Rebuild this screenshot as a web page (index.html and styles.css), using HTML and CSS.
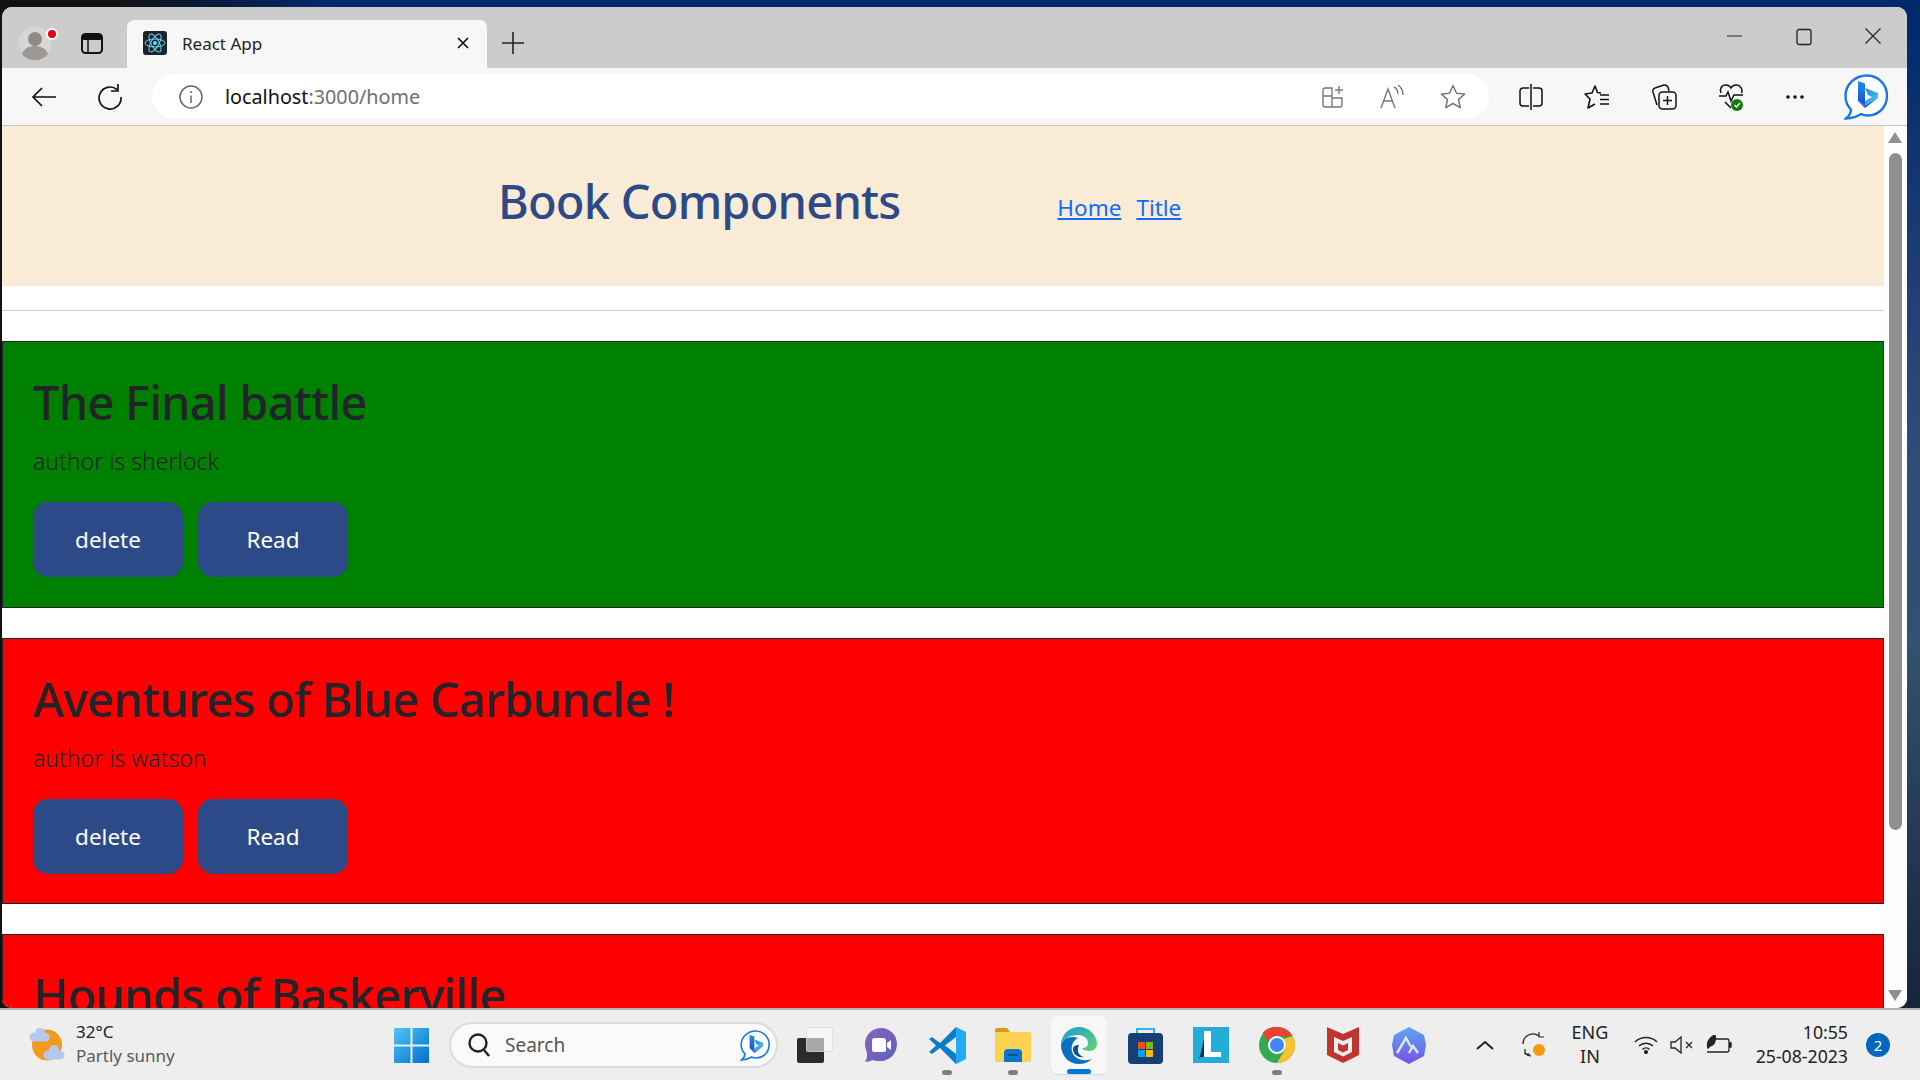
FILE: index.html
```html
<!DOCTYPE html>
<html lang="en">
<head>
    <meta charset="UTF-8">
    <title>React App</title>
    <link rel="stylesheet" href="styles.css">
</head>
<body>
    <svg class="defs" width="0" height="0">
        <defs>
            <linearGradient id="bingStem" x1="0" y1="0" x2="0" y2="1">
                <stop offset="0" stop-color="#1b8fe8"/>
                <stop offset="1" stop-color="#1a4fd0"/>
            </linearGradient>
            <linearGradient id="bingBowl" x1="0" y1="0" x2="1" y2="1">
                <stop offset="0" stop-color="#2f7fe6"/>
                <stop offset="1" stop-color="#45d2f0"/>
            </linearGradient>
            <linearGradient id="winFill" x1="0" y1="0" x2="1" y2="1">
                <stop offset="0" stop-color="#4fc6f5"/>
                <stop offset="1" stop-color="#0070cc"/>
            </linearGradient>
            <linearGradient id="edgeFill" x1="0" y1="0" x2="1" y2="1">
                <stop offset="0" stop-color="#1c9ad6"/>
                <stop offset="1" stop-color="#60d86c"/>
            </linearGradient>
            <linearGradient id="teamsFill" x1="0" y1="0" x2="1" y2="1">
                <stop offset="0" stop-color="#8a62b8"/>
                <stop offset="1" stop-color="#5b62c4"/>
            </linearGradient>
            <linearGradient id="hexFill" x1="0" y1="0" x2="0" y2="1">
                <stop offset="0" stop-color="#5aa8f0"/>
                <stop offset="1" stop-color="#7a4fe8"/>
            </linearGradient>
            <symbol id="bing" viewBox="0 0 44 46">
                <path d="M23 1.500c11 0 20 9 20 20s-8 20-19 20c-3 0-5-.5-7-1.500-3 2-8 4-15 4.500 3-2.500 5-6 5-9C3 31.500 1.500 27 1.500 22 1.500 10.500 11 1.500 23 1.500z" fill="#fff" stroke="#1a78e0" stroke-width="2.400"/>
                <path d="M14 7l7 2.500v22L14 27z" fill="url(#bingStem)"/>
                <path d="M21 31.500l13-7.500v-5l-13-5 3 7 4 2-7 4z" fill="url(#bingBowl)"/>
                <path d="M14 27l7 7 13-10-13 7.500z" fill="#1a5ad8"/>
            </symbol>
        </defs>
    </svg>

    <div class="desktop">
        <div class="window">
            <div class="tabstrip">
                <div class="avatar">
                    <svg width="34" height="34" viewBox="0 0 34 34">
                        <circle cx="17" cy="17" r="16.5" fill="#d8d6d4"/>
                        <circle cx="17" cy="13" r="7" fill="#8e8a86"/>
                        <path d="M4 28c2-6 8-8 13-8s11 2 13 8c-3 4-8 6-13 6S7 32 4 28z" fill="#9c9894"/>
                    </svg>
                    <span class="avatar-dot"></span>
                </div>
                <svg class="sidebar-btn" width="22" height="21" viewBox="0 0 22 21">
                    <rect x="1" y="1" width="20" height="19" rx="3.5" fill="none" stroke="#111" stroke-width="2"/>
                    <rect x="1" y="1" width="20" height="6" rx="2" fill="#111"/>
                    <path d="M7 7v13" stroke="#111" stroke-width="1.5"/>
                </svg>
                <div class="tab">
                    <svg class="favicon" width="24" height="24" viewBox="0 0 24 24">
                        <rect width="24" height="24" rx="3" fill="#20232a"/>
                        <g fill="none" stroke="#61dafb" stroke-width="1">
                            <ellipse cx="12" cy="12" rx="10" ry="4"/>
                            <ellipse cx="12" cy="12" rx="10" ry="4" transform="rotate(60 12 12)"/>
                            <ellipse cx="12" cy="12" rx="10" ry="4" transform="rotate(120 12 12)"/>
                        </g>
                        <circle cx="12" cy="12" r="2" fill="#61dafb"/>
                    </svg>
                    <span class="tab-title">React App</span>
                    <svg width="14" height="14" viewBox="0 0 14 14">
                        <path d="M2 2l10 10M12 2L2 12" stroke="#111" stroke-width="1.7"/>
                    </svg>
                </div>
                <svg class="new-tab" width="22" height="22" viewBox="0 0 22 22">
                    <path d="M11 0v22M0 11h22" stroke="#222" stroke-width="1.6"/>
                </svg>
                <div class="win-controls">
                    <svg width="16" height="16" viewBox="0 0 16 16"><path d="M0 8h15" stroke="#222" stroke-width="1.2"/></svg>
                    <svg width="16" height="18" viewBox="0 0 16 18"><rect x="1" y="1.500" width="14" height="15" rx="2" fill="none" stroke="#222" stroke-width="1.3"/></svg>
                    <svg width="16" height="16" viewBox="0 0 16 16"><path d="M0.500 0.500l15 15M15.500 0.500l-15 15" stroke="#222" stroke-width="1.2"/></svg>
                </div>
            </div>

            <div class="toolbar">
                <svg class="tool-back" width="26" height="22" viewBox="0 0 26 22">
                    <path d="M25 11H2M11 2l-9 9 9 9" fill="none" stroke="#111" stroke-width="1.7"/>
                </svg>
                <svg class="tool-reload" width="26" height="26" viewBox="0 0 26 26">
                    <path d="M20 5.500A11 11 0 1 0 24 13" fill="none" stroke="#111" stroke-width="1.7"/>
                    <path d="M21 0v7h-7" fill="none" stroke="#111" stroke-width="1.7"/>
                </svg>
                <div class="addressbar">
                    <svg class="info-icon" width="24" height="24" viewBox="0 0 24 24">
                        <circle cx="12" cy="12" r="11" fill="none" stroke="#666" stroke-width="1.500"/>
                        <path d="M12 10.500V18" stroke="#666" stroke-width="1.500"/>
                        <circle cx="12" cy="7" r="1.100" fill="#666"/>
                    </svg>
                    <span class="url"><span class="url-host">localhost</span>:3000/home</span>
                    <div class="address-icons">
                        <svg width="22" height="24" viewBox="0 0 22 24" fill="none" stroke="#777" stroke-width="1.400">
                            <path d="M10 3H3a2 2 0 0 0-2 2v6h9zM10 11H1v9a2 2 0 0 0 2 2h7zM10 13h10v7a2 2 0 0 1-2 2h-8z"/>
                            <path d="M17 1v8M13 5h8"/>
                        </svg>
                        <svg width="24" height="26" viewBox="0 0 24 26" fill="none" stroke="#777" stroke-width="1.400">
                            <path d="M1 24l7-19 7 19M3.500 17h9"/>
                            <path d="M14 3c2 1 4 3 4 7M18 1c3 2 5 5 5 10"/>
                        </svg>
                        <svg width="26" height="25" viewBox="0 0 26 25" fill="none" stroke="#777" stroke-width="1.500">
                            <path d="M13 1.500l3.500 7.700 8 .9-6 5.500 1.700 8.100-7.200-4.200-7.200 4.200 1.700-8.100-6-5.500 8-.9z" stroke-linejoin="round"/>
                        </svg>
                    </div>
                </div>
                <div class="toolbar-icons">
                    <svg width="24" height="26" viewBox="0 0 24 26" fill="none" stroke="#111" stroke-width="1.500">
                        <path d="M10 4H4a3 3 0 0 0-3 3v12a3 3 0 0 0 3 3h6M14 4h6a3 3 0 0 1 3 3v12a3 3 0 0 1-3 3h-6M12 0v26"/>
                    </svg>
                    <svg width="26" height="26" viewBox="0 0 26 26" fill="none" stroke="#111" stroke-width="1.600">
                        <path d="M17 9l-3.500-.5L11 2 8 9 1 10l5 5-2 9 7-4" stroke-linejoin="round"/>
                        <path d="M16 11h9M16 15.500h9M16 20h9"/>
                    </svg>
                    <svg width="26" height="28" viewBox="0 0 26 28" fill="none" stroke="#111" stroke-width="1.500">
                        <path d="M6 22L2 9a3 3 0 0 1 2-4l9-3c2-.5 3 .5 4 2l1 4"/>
                        <rect x="8" y="9" width="17" height="17" rx="3.500"/>
                        <path d="M16.500 13v9M12 17.500h9"/>
                    </svg>
                    <svg width="26" height="28" viewBox="0 0 26 28" fill="none">
                        <path d="M3 10C1 6 4 2 7 2c3-.5 5 1 6 3 1-2 3-3.500 6-3 4 .5 6 5 4.500 8M7 19l6 6" stroke="#111" stroke-width="1.500"/>
                        <path d="M1 13h7l2-4 3 9 3-6h9" stroke="#111" stroke-width="1.500"/>
                        <circle cx="19" cy="22" r="6" fill="#107c10"/>
                        <path d="M16.500 22l2 2 3.500-4" stroke="#fff" stroke-width="1.300"/>
                    </svg>
                    <svg width="20" height="6" viewBox="0 0 20 6" fill="#111">
                        <circle cx="3" cy="3" r="1.800"/><circle cx="10" cy="3" r="1.800"/><circle cx="17" cy="3" r="1.800"/>
                    </svg>
                </div>
                <svg class="tool-bing" width="44" height="46"><use href="#bing"/></svg>
            </div>

            <div class="viewport">
                <div class="page">
                    <header class="page-header">
                        <h1 class="brand">Book Components</h1>
                        <nav class="nav-links">
                            <a href="#">Home</a>
                            <a href="#">Title</a>
                        </nav>
                    </header>
                    <hr class="divider">
                    <section class="book book-green">
                        <h1>The Final battle</h1>
                        <p>author is sherlock</p>
                        <div class="book-actions">
                            <button class="btn">delete</button>
                            <button class="btn">Read</button>
                        </div>
                    </section>
                    <section class="book book-red">
                        <h1>Aventures of Blue Carbuncle !</h1>
                        <p>author is watson</p>
                        <div class="book-actions">
                            <button class="btn">delete</button>
                            <button class="btn">Read</button>
                        </div>
                    </section>
                    <section class="book book-red">
                        <h1>Hounds of Baskerville</h1>
                    </section>
                </div>
                <div class="scrollbar">
                    <span class="arrow-up"></span>
                    <span class="thumb"></span>
                    <span class="arrow-down"></span>
                </div>
            </div>
        </div>
    </div>

    <footer class="taskbar">
        <div class="weather">
            <svg width="38" height="36" viewBox="0 0 38 36">
                <ellipse cx="19" cy="18" rx="15" ry="15.500" fill="#f39a1c"/>
                <g fill="#b5c9f0">
                    <circle cx="12" cy="6" r="5"/>
                    <circle cx="6" cy="10" r="4.500"/>
                    <circle cx="17" cy="10" r="4.500"/>
                    <rect x="6" y="9" width="11" height="5.500"/>
                    <circle cx="26" cy="23" r="5"/>
                    <circle cx="20" cy="28" r="4.500"/>
                    <circle cx="32" cy="28" r="4.500"/>
                    <rect x="20" y="27" width="12" height="5.500"/>
                </g>
            </svg>
            <div class="weather-text">
                <span class="temp">32°C</span>
                <span class="sky">Partly sunny</span>
            </div>
        </div>
        <svg class="start" width="35" height="35" viewBox="0 0 35 35">
            <path d="M0 1a1 1 0 0 1 1-1h15.500v16.500H0zM18.500 0H34a1 1 0 0 1 1 1v15.500H18.500zM0 18.500h16.500V35H1a1 1 0 0 1-1-1zM18.500 18.500H35V34a1 1 0 0 1-1 1H18.500z" fill="url(#winFill)"/>
        </svg>
        <div class="searchbox">
            <svg width="24" height="26" viewBox="0 0 24 26" fill="none" stroke="#222" stroke-width="2.400">
                <circle cx="11" cy="11" r="8.500"/>
                <path d="M17 18l5 6"/>
            </svg>
            <span class="search-label">Search</span>
            <svg class="search-bing" width="30" height="31"><use href="#bing"/></svg>
        </div>
        <div class="apps">
            <div class="app">
                <svg width="36" height="36" viewBox="0 0 36 36">
                    <rect x="0" y="11" width="27" height="25" rx="2" fill="#2b2b2b"/>
                    <rect x="9.500" y="0.500" width="26" height="24" rx="2" fill="#f6f6f6" stroke="#dedede"/>
                    <rect x="9.500" y="11" width="17.500" height="13.500" fill="#a8a8a8"/>
                </svg>
            </div>
            <div class="app">
                <svg width="34" height="36" viewBox="0 0 34 36">
                    <path d="M17 1c9 0 16 7 16 16s-7 17-16 17c-3 0-6 0-8-1-3 1-6 2-8 2 2-3 2-6 2-9-1-3-2-6-2-9C1 8 8 1 17 1z" fill="url(#teamsFill)"/>
                    <rect x="8" y="11" width="14" height="14" rx="2.500" fill="#fff"/>
                    <path d="M23 16l4-3v10l-4-3z" fill="#fff"/>
                </svg>
            </div>
            <div class="app has-dot">
                <svg width="37" height="37" viewBox="0 0 37 37">
                    <path d="M27 0L11 16 3 10 0 12l7 6.500L0 25l3 2 8-6 16 16 3-2V2z" fill="#0a7cc8"/>
                    <path d="M27 10v17l-11-8.500z" fill="#ececec"/>
                    <path d="M27 0l10 5v27l-10 5z" fill="#23aaf2"/>
                </svg>
            </div>
            <div class="app has-dot">
                <svg width="36" height="34" viewBox="0 0 36 34">
                    <path d="M0 2a2 2 0 0 1 2-2h10l3 4h-15z" fill="#d99a12"/>
                    <path d="M0 4h34a2 2 0 0 1 2 2v26a2 2 0 0 1-2 2H0z" fill="#fcd250"/>
                    <path d="M9 34v-9a4 4 0 0 1 4-4h10a4 4 0 0 1 4 4v9z" fill="#0a76cc"/>
                    <path d="M13 27h10" stroke="#063e78" stroke-width="1.500"/>
                </svg>
            </div>
            <div class="app app-active">
                <svg width="36" height="37" viewBox="0 0 36 37">
                    <path d="M0 18C0 8 8 0 18 0c10 0 18 8 18 17 0 4-3 7-8 7-3 0-6-1-7-3 4 0 6-2 6-5 0-5-5-8-10-8C8 8 2 12 0 18z" fill="url(#edgeFill)"/>
                    <path d="M0 18c0 11 8 19 18 19 5 0 10-2 13-5-9 3-16 0-19-5-3-6-1-13 5-16C8 8 2 12 0 18z" fill="#0c6fc0"/>
                    <path d="M12 22c0 6 6 9 11 8-5-1-8-6-5-12-3 0-6 1-6 4z" fill="#0a4e9a"/>
                </svg>
            </div>
            <div class="app">
                <svg width="35" height="37" viewBox="0 0 35 37">
                    <path d="M9 8V2h17v6" fill="none" stroke="#2fb4ee" stroke-width="2"/>
                    <rect x="0" y="6" width="35" height="31" rx="4" fill="#173f75"/>
                    <rect x="10" y="15" width="7" height="7" fill="#f25022"/>
                    <rect x="18" y="15" width="7" height="7" fill="#7fba00"/>
                    <rect x="10" y="23" width="7" height="7" fill="#00a4ef"/>
                    <rect x="18" y="23" width="7" height="7" fill="#ffb900"/>
                </svg>
            </div>
            <div class="app">
                <svg width="36" height="36" viewBox="0 0 36 36">
                    <rect width="36" height="36" fill="#23acd8"/>
                    <path d="M11 4h7v21h10v5H11z" fill="#fff"/>
                    <path d="M11 12v18H7.500L6 33z" fill="#12305e"/>
                </svg>
            </div>
            <div class="app has-dot">
                <svg width="36" height="36" viewBox="0 0 36 36">
                    <circle cx="18" cy="18" r="18" fill="#34a853"/>
                    <path d="M18 0a18 18 0 0 1 15.600 9H18a9 9 0 0 0-8.500 6L3.500 6A18 18 0 0 1 18 0z" fill="#ea4335"/>
                    <path d="M33.600 9A18 18 0 0 1 18 36l8-13.500A9 9 0 0 0 24.500 12z" fill="#fbc02d"/>
                    <circle cx="18" cy="18" r="9" fill="#fff"/>
                    <circle cx="18" cy="18" r="7" fill="#4285f4"/>
                </svg>
            </div>
            <div class="app">
                <svg width="32" height="36" viewBox="0 0 32 36">
                    <path d="M0 0l16 7 16-7v28L16 36 0 28z" fill="#c1342f"/>
                    <path d="M7 10l9 4 9-4v15l-9 4.500L7 25z" fill="#eeeeee"/>
                    <path d="M11 16l5 2.500 5-2.500v7l-5 2.500-5-2.500z" fill="#c1342f"/>
                </svg>
            </div>
            <div class="app">
                <svg width="34" height="37" viewBox="0 0 34 37">
                    <path d="M17 0l15 8 2 10-2 11-15 8-15-8-2-11 2-10z" fill="url(#hexFill)"/>
                    <path d="M5 26L14 11l5 9M17 26l4-7 5 7" fill="none" stroke="#dbe6ff" stroke-width="2.500"/>
                </svg>
            </div>
        </div>
        <div class="tray">
            <svg class="tray-chevron" width="18" height="10" viewBox="0 0 18 10">
                <path d="M1 9l8-7 8 7" fill="none" stroke="#222" stroke-width="2"/>
            </svg>
            <svg class="tray-sync" width="26" height="26" viewBox="0 0 26 26">
                <path d="M2 12a10 10 0 0 1 16-8M18 0v5h5M4 17v5h5M4 21a9 9 0 0 0 6 3" fill="none" stroke="#222" stroke-width="1.200"/>
                <circle cx="18" cy="18" r="6" fill="#f79a0c"/>
            </svg>
            <div class="tray-lang"><span>ENG</span><span>IN</span></div>
            <svg width="24" height="18" viewBox="0 0 24 18" fill="none" stroke="#222" stroke-width="1.500">
                <path d="M1 6a16 16 0 0 1 22 0M5 10a10 10 0 0 1 14 0M8.500 13.500a5 5 0 0 1 7 0"/>
                <circle cx="12" cy="16" r="1.300" fill="#222"/>
            </svg>
            <svg class="tray-sound" width="24" height="18" viewBox="0 0 24 18" fill="none" stroke="#222" stroke-width="1.300">
                <path d="M1 6h4l6-5v16l-6-5H1z"/>
                <path d="M16 6l6 6M22 6l-6 6"/>
            </svg>
            <svg class="tray-battery" width="26" height="20" viewBox="0 0 26 20" fill="none" stroke="#222" stroke-width="1.300">
                <path d="M9 4h12a2 2 0 0 1 2 2v9a2 2 0 0 1-2 2H1"/>
                <path d="M23 8h2v4h-2" fill="#222"/>
                <path d="M2 13C0 7 4 2 9 0c1 5 0 10-5 11z" fill="#222"/>
            </svg>
            <div class="clock"><span>10:55</span><span>25-08-2023</span></div>
            <span class="badge">2</span>
        </div>
    </footer>
</body>
</html>
```

FILE: styles.css
```css
* {
    box-sizing: border-box;
}

body {
    margin: 0;
    width: 1920px;
    height: 1080px;
    overflow: hidden;
    display: flex;
    flex-direction: column;
    font-family: "Noto Sans", "Open Sans", sans-serif;
    color: #212529;
    background: linear-gradient(to right, #111 0, #111 105px, transparent 330px), linear-gradient(to bottom, #00286c 0, #2f4a78 40%, #33506f 60%, #111c30 100%);
}

.defs {
    position: absolute;
}

.desktop {
    flex: 1;
    min-height: 0;
    padding: 7px 13px 0 2px;
}

.window {
    height: 100%;
    display: flex;
    flex-direction: column;
    overflow: hidden;
    border-radius: 10px;
    background: #fff;
}

/* tab strip */
.tabstrip {
    height: 61px;
    flex-shrink: 0;
    display: flex;
    background: #cccccc;
    padding-left: 16px;
}

.avatar {
    position: relative;
    width: 34px;
    height: 34px;
    margin-top: 19px;
}

.avatar-dot {
    position: absolute;
    top: 2px;
    right: -6px;
    width: 12px;
    height: 12px;
    border-radius: 50%;
    background: #e6000f;
    border: 2px solid #fff;
}

.sidebar-btn {
    margin: 26px 0 0 29px;
}

.tab {
    width: 360px;
    height: 48px;
    margin: 13px 0 0 24px;
    padding: 0 17px 2px 16px;
    display: flex;
    align-items: center;
    background: #f7f7f7;
    border-radius: 7px 7px 0 0;
}

.tab-title {
    flex: 1;
    margin-left: 15px;
    font-size: 17px;
    color: #222;
}

.new-tab {
    margin: 25px 0 0 15px;
}

.win-controls {
    margin-left: auto;
    padding: 21px 26px 0 0;
    display: flex;
    align-items: flex-start;
    gap: 53px;
}

/* toolbar */
.toolbar {
    height: 58px;
    flex-shrink: 0;
    display: flex;
    align-items: center;
    padding-left: 29px;
    background: #f7f7f7;
    border-bottom: 1px solid #c4c4c4;
}

.tool-reload {
    margin-left: 40px;
}

.addressbar {
    width: 1337px;
    height: 45px;
    margin-left: 29px;
    padding: 0 23px 0 27px;
    display: flex;
    align-items: center;
    background: #fff;
    border-radius: 23px;
}

.url {
    margin-left: 22px;
    font-size: 19.75px;
    color: #6f6f6f;
}

.url-host {
    color: #111;
}

.address-icons {
    margin-left: auto;
    display: flex;
    align-items: center;
    gap: 36px;
}

.toolbar-icons {
    display: flex;
    align-items: center;
    gap: 41px;
    margin-left: 30px;
}

.tool-bing {
    margin-left: 39px;
}

/* page */
.viewport {
    flex: 1;
    min-height: 0;
    display: flex;
}

.page {
    width: 1882px;
    overflow: hidden;
}

.page-header {
    height: 160px;
    padding: 45px 0 0 496px;
    display: flex;
    background: antiquewhite;
}

.brand {
    margin: 0;
    font-size: 47px;
    font-weight: 500;
    letter-spacing: -0.8px;
    line-height: 60px;
    color: #2c4a87;
}

.nav-links {
    margin: 19px 0 0 157px;
    display: flex;
    gap: 15px;
    font-size: 22.5px;
    line-height: 36px;
}

.nav-links a {
    color: #0d6efd;
}

.divider {
    margin: 24px 0 30px;
    border: 0;
    border-top: 1px solid #cfcfcf;
}

.book {
    height: 266.5px;
    margin-bottom: 30px;
    padding: 30px;
    border: 1px solid #212529;
}

.book-green {
    background: green;
}

.book-red {
    background: red;
}

.book h1 {
    margin: 0 0 11px;
    font-size: 47px;
    font-weight: 500;
    letter-spacing: -0.75px;
    line-height: 60px;
}

.book p {
    margin: 0 0 23px;
    font-size: 23px;
    font-weight: 300;
    line-height: 36px;
}

.book-actions {
    display: flex;
    gap: 15px;
}

.btn {
    width: 150px;
    height: 75px;
    padding: 0;
    border: 0;
    border-radius: 15px;
    background: #2c4a87;
    color: #fff;
    font-family: inherit;
    font-size: 22.5px;
}

.scrollbar {
    width: 23px;
    position: relative;
    background: #fdfdfd;
}

.arrow-up,
.arrow-down {
    position: absolute;
    left: 4px;
    width: 0;
    height: 0;
    border-left: 7.500px solid transparent;
    border-right: 7.500px solid transparent;
}

.arrow-up {
    top: 6px;
    border-bottom: 11px solid #8f8f8f;
}

.arrow-down {
    bottom: 7px;
    border-top: 11px solid #8f8f8f;
}

.thumb {
    position: absolute;
    top: 27px;
    left: 5px;
    width: 13px;
    height: 677px;
    border-radius: 7px;
    background: #8f8f8f;
}

/* taskbar */
.taskbar {
    height: 72px;
    flex-shrink: 0;
    display: flex;
    align-items: center;
    background: #eeeeee;
    border-top: 2px solid #b5b5b5;
}

.weather {
    width: 394px;
    padding-left: 28px;
    display: flex;
    align-items: center;
    gap: 10px;
}

.weather-text {
    display: flex;
    flex-direction: column;
    margin-top: -2px;
    font-size: 17px;
    line-height: 24px;
}

.temp {
    color: #222;
}

.sky {
    color: #5a5a5a;
}

.searchbox {
    width: 329px;
    height: 46px;
    margin-left: 20px;
    padding: 0 6px 0 16px;
    display: flex;
    align-items: center;
    background: #fafafa;
    border: 2px solid #dcdcdc;
    border-radius: 23px;
}

.search-label {
    flex: 1;
    margin-left: 14px;
    font-size: 19px;
    color: #555;
}

.apps {
    display: flex;
    margin-left: 4px;
}

.app {
    position: relative;
    width: 66px;
    height: 70px;
    display: flex;
    align-items: center;
    justify-content: center;
}

.has-dot::after {
    content: "";
    position: absolute;
    left: 28px;
    bottom: 5px;
    width: 10px;
    height: 5px;
    border-radius: 3px;
    background: #808080;
}

.app-active::before {
    content: "";
    position: absolute;
    top: 6px;
    left: 5px;
    width: 56px;
    height: 58px;
    border-radius: 6px;
    background: #f7f7f7;
    box-shadow: 0 1px 1px #d8d8d8;
}

.app-active svg {
    position: relative;
}

.app-active::after {
    content: "";
    position: absolute;
    left: 21px;
    bottom: 6px;
    width: 24px;
    height: 5px;
    border-radius: 3px;
    background: #0078d4;
}

.tray {
    flex: 1;
    display: flex;
    align-items: center;
    color: #222;
}

.tray-chevron {
    margin-left: 34px;
}

.tray-sync {
    margin-left: 27px;
}

.tray-lang {
    width: 40px;
    margin: -2px 24px 0 23px;
    display: flex;
    flex-direction: column;
    align-items: center;
    font-size: 18px;
    line-height: 24px;
}

.tray-sound {
    margin-left: 12px;
}

.tray-battery {
    margin-left: 12px;
}

.clock {
    width: 116px;
    margin: -2px 0 0 0;
    display: flex;
    flex-direction: column;
    align-items: flex-end;
    font-size: 17.7px;
    line-height: 24px;
}

.badge {
    width: 24px;
    height: 24px;
    margin-left: 18px;
    border-radius: 50%;
    background: #0067c0;
    color: #fff;
    font-size: 15px;
    line-height: 24px;
    text-align: center;
}
```
